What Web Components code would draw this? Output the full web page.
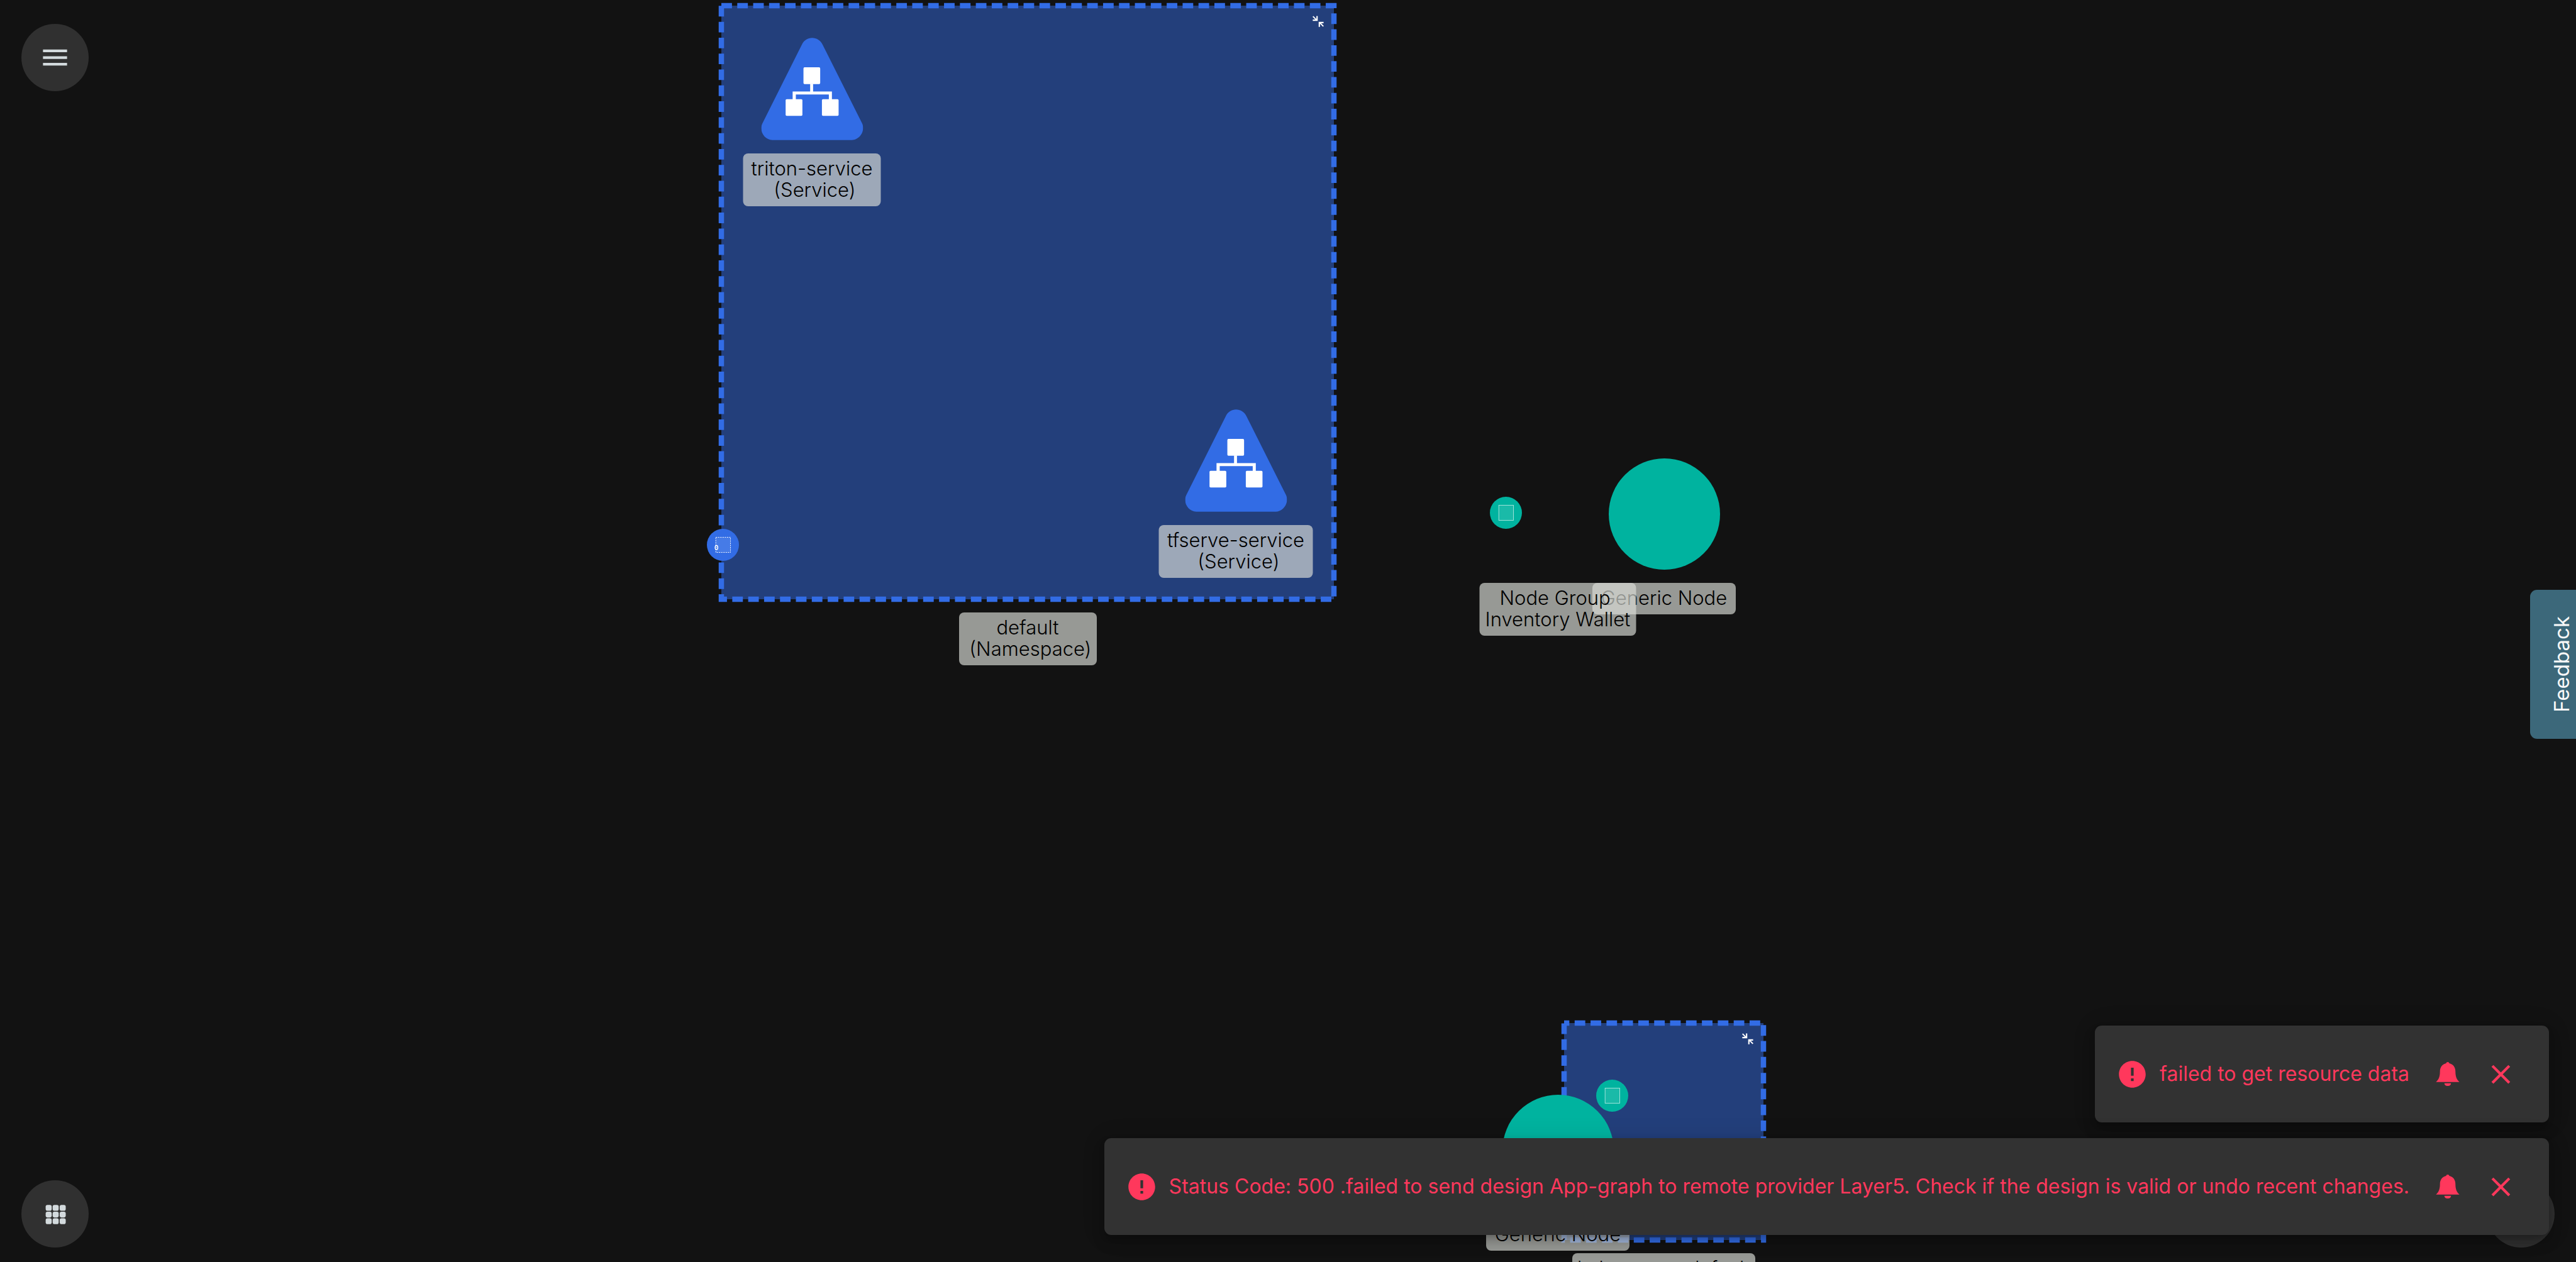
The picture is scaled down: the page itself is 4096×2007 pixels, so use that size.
<!DOCTYPE html>
<html lang="en">
<head>
<meta charset="utf-8">
<title>Design canvas</title>
<style>
  html, body { margin: 0; height: 100%; background: #121212; }
  body { font-family: Inter, "Open Sans", sans-serif; overflow: hidden; }
</style>
</head>
<body>
<design-app></design-app>

<script>
const define = (name, html, setup) => customElements.define(name, class extends HTMLElement {
  constructor() {
    super();
    const root = this.attachShadow({ mode: 'open' });
    const t = document.createElement('template');
    t.innerHTML = html.trim();
    root.append(t.content.cloneNode(true));
  }
  connectedCallback() { if (setup) setup(this, this.shadowRoot); }
});

/* Text plate that sits under a node */
define('node-label', `
<style>
  :host { display: block; box-sizing: border-box; padding: 7px 0 9px; border-radius: 8px;
    background: rgba(218, 221, 215, .67); color: #000; font-size: 31px; font-weight: 300;
    line-height: 34px; text-align: center; white-space: pre; }
</style><slot></slot>`);

/* A node: shape on top, label beneath, placed by the centre of its top edge */
define('graph-node', `
<style>
  :host { position: absolute; left: var(--x); top: var(--y); transform: translateX(-50%);
    display: flex; flex-direction: column; align-items: center; gap: 21px; }
</style><slot></slot>`);

define('service-shape', `
<style>:host { display: block; height: 163px; } svg { display: block; width: 162px; height: 163px; }</style>
<svg viewBox="0 0 228.5 229" aria-hidden="true">
  <path fill="#326ce5" d="M91 15C100-5 128-5 137.5 15L226 191.5C234 208 221 229 203 229H25C7 229-6 208 2.7 191.5Z"/>
  <g fill="#fff">
    <rect x="94.6" y="66" width="37.5" height="37.6" rx="2.5"/>
    <rect x="54.6" y="137.3" width="37.6" height="37.5" rx="2.5"/>
    <rect x="136" y="137.3" width="37.4" height="37.5" rx="2.5"/>
    <path d="M109.6 103h6.6v17h42.2v18h-6.9v-11.3h-74v11.3h-7.2v-18h39.3z"/>
  </g>
</svg>`);

define('circle-shape', `
<style>:host { display: block; width: 177px; height: 177px; border-radius: 50%; background: #00b39f; }</style>`);

/* Small round badge of a node group; the "link" kind has a dashed frame and a ring */
define('group-badge', `
<style>
  :host { position: absolute; left: var(--x); top: var(--y); width: 51px; height: 51px; border-radius: 50%;
    background: #00b39f; }
  :host([kind=link]) { background: #326ce5; }
  svg { display: block; width: 51px; height: 51px; }
  .ring { display: none; }
  :host([kind=link]) .ring { display: inline; }
  :host([kind=link]) .frame { stroke-dasharray: 3 2; stroke-opacity: 1; stroke-width: 1.3; }
</style>
<svg viewBox="0 0 72 72" aria-hidden="true">
  <rect class="frame" x="20" y="19" width="33" height="34" fill="#fff" fill-opacity=".1" stroke="#fff" stroke-opacity=".7" stroke-width="1.2"/>
  <g class="ring"><ellipse cx="21.5" cy="42" rx="3" ry="4.6" fill="#326ce5" stroke="#fff" stroke-width="2"/><circle cx="21.5" cy="42" r="1.4" fill="#b9cdf6"/></g>
</svg>`);

/* Dashed namespace frame with a collapse button and a centred label */
define('name-space', `
<style>
  :host { position: absolute; left: var(--x); top: var(--y); width: var(--w);
    display: flex; flex-direction: column; align-items: center; gap: 21px; }
  .box { width: 100%; height: var(--h); display: flex; justify-content: flex-end; align-items: flex-start;
    box-sizing: border-box; padding: 16px; background: #233f7b; position: relative; }
  .edge { position: absolute; inset: 0; width: 100%; height: 100%; overflow: visible; }
  button { all: unset; width: 18px; height: 18px; position: relative; }
  button svg { display: block; width: 18px; height: 18px; }
</style>
<div class="box">
  <svg class="edge" aria-hidden="true"><rect width="100%" height="100%" fill="none" stroke="#326ce5" stroke-width="8.5" stroke-dasharray="16.86 8.43"/></svg>
  <button aria-label="Collapse"><svg viewBox="0 0 24 24" fill="none" stroke="#fff" stroke-width="2.8">
    <path d="M1 1.5l8 8M9.6.5v9H.5M23 22.5l-8-8M14.4 23.5v-9h9"/></svg></button>
</div>
<slot></slot>`, (el, root) => {
  root.querySelector('rect').setAttribute('stroke-dashoffset', el.getAttribute('phase') || 0);
});

define('round-button', `
<style>
  :host { display: block; width: 107px; height: 107px; }
  button { all: unset; display: flex; align-items: center; justify-content: center;
    width: 107px; height: 107px; border-radius: 50%; background: #303030; color: #d3dadd; }
</style>
<button><slot></slot></button>`, (el, root) => {
  root.querySelector('button').setAttribute('aria-label', el.getAttribute('label'));
});

define('feedback-tab', `
<style>
  :host { display: block; }
  button { all: unset; box-sizing: border-box; display: flex; align-items: center; justify-content: center;
    width: 73px; height: 237px; padding-left: 27px; border-radius: 11px 0 0 11px;
    background: #3c687a; color: #f8f8f8; font-size: 33px; line-height: 40px; }
  span { writing-mode: vertical-rl; transform: rotate(180deg); }
</style>
<button><span>Feedback</span></button>`);

define('snack-bar', `
<style>
  :host { display: flex; align-items: center; box-sizing: border-box; height: 154px; padding: 0 34px;
    border-radius: 11px; background: #323232; color: #ff385c; font-size: 32px; line-height: 46px; white-space: nowrap;
    box-shadow: 0 6px 11px -2px rgba(0,0,0,.2), 0 13px 21px rgba(0,0,0,.14), 0 2px 38px rgba(0,0,0,.12); }
  .text { padding: 0 18px; }
  svg { display: block; fill: currentColor; }
  .mui { width: 51px; height: 51px; }
  .bell { width: 38px; height: 38px; }
  button { all: unset; display: flex; align-items: center; justify-content: center; width: 85px; height: 85px; }
</style>
<svg class="mui" viewBox="0 0 24 24" aria-hidden="true"><path d="M12 2C6.480 2 2 6.480 2 12s4.480 10 10 10 10-4.480 10-10S17.520 2 12 2zm1 15h-2v-2h2v2zm0-4h-2V7h2v6z"/></svg>
<span class="text"><slot></slot></span>
<button aria-label="Open notifications"><svg class="bell" viewBox="0 0 53 54"><path d="M0 45C6 40 9 33 9 22 9 12 14 5 23 3 23-1 30-1 30 3 39 5 44 12 44 22 44 33 47 40 53 45ZM19 48H34C34 52 31 54 26.500 54 22 54 19 52 19 48Z"/></svg></button>
<button aria-label="Close"><svg class="mui" viewBox="0 0 24 24"><path d="M19 6.410L17.590 5 12 10.590 6.410 5 5 6.410 10.590 12 5 17.590 6.410 19 12 13.410 17.590 19 19 17.590 13.410 12z"/></svg></button>`);

define('design-canvas', `
<style>
  :host { display: block; position: relative; overflow: hidden; }
</style>
<name-space style="--x:1147px;--y:9px;--w:974px;--h:944px">
  <node-label style="width:219px">default
 (Namespace)</node-label>
</name-space>
<name-space phase="8.5" style="--x:2487px;--y:1627px;--w:317px;--h:345px">
  <node-label style="width:291px">kubernetes-default
 (Namespace)</node-label>
</name-space>

<graph-node style="--x:1291px;--y:60px">
  <service-shape></service-shape>
  <node-label style="width:219px">triton-service
 (Service)</node-label>
</graph-node>
<graph-node style="--x:1965px;--y:651px">
  <service-shape></service-shape>
  <node-label style="width:245px">tfserve-service
 (Service)</node-label>
</graph-node>
<group-badge kind="link" style="--x:1124px;--y:841px"></group-badge>

<graph-node style="--x:2646px;--y:729px">
  <circle-shape></circle-shape>
  <node-label style="width:228px">Generic Node</node-label>
</graph-node>
<graph-node style="--x:2477px;--y:927px">
  <node-label style="width:249px">Node Group 
Inventory Wallet</node-label>
</graph-node>
<group-badge style="--x:2369px;--y:790px"></group-badge>

<graph-node style="--x:2477px;--y:1741px">
  <circle-shape></circle-shape>
  <node-label style="width:228px">Generic Node</node-label>
</graph-node>
<group-badge style="--x:2538px;--y:1717px"></group-badge>`);

define('design-app', `
<style>
  :host { display: grid; grid-template: 100vh / 100%; }
  :host > * { grid-area: 1 / 1; }
  design-canvas, .bar, feedback-tab, .snacks { grid-area: 1 / 1; }
  .bar { display: flex; justify-content: space-between; padding: 38px 34px 23px; pointer-events: none; z-index: 1; }
  .bar > div { display: flex; flex-direction: column; justify-content: space-between; }
  .bar > .right { justify-content: flex-end; }
  feedback-tab { place-self: center end; margin-top: 105px; z-index: 1; }
  .snacks { place-self: end; display: flex; flex-direction: column; align-items: flex-end; gap: 25px;
    padding: 0 43px 43px 0; z-index: 2; }
  .menu, .apps { width: 51px; height: 51px; fill: currentColor; }
</style>
<design-canvas></design-canvas>
<div class="bar">
  <div>
    <round-button label="Menu"><svg class="menu" viewBox="0 0 24 24"><path d="M3 18h18v-2H3v2zm0-5h18v-2H3v2zm0-7v2h18V6H3z"/></svg></round-button>
    <round-button label="Apps"><svg class="apps" viewBox="0 0 72 72">
      <g id="r"><rect x="15" y="16" width="13.500" height="13" rx="4"/><rect x="30.700" y="16" width="13.500" height="13" rx="4"/><rect x="46.500" y="16" width="13.500" height="13" rx="4"/></g>
      <use href="#r" y="15"/><use href="#r" y="30"/></svg></round-button>
  </div>
  <div class="right"><round-button label="Help"></round-button></div>
</div>
<feedback-tab></feedback-tab>
<div class="snacks">
  <snack-bar role="alert">failed to get resource data</snack-bar>
  <snack-bar role="alert">Status Code: 500 .failed to send design App-graph to remote provider Layer5. Check if the design is valid or undo recent changes.</snack-bar>
</div>`);
</script>
</body>
</html>
